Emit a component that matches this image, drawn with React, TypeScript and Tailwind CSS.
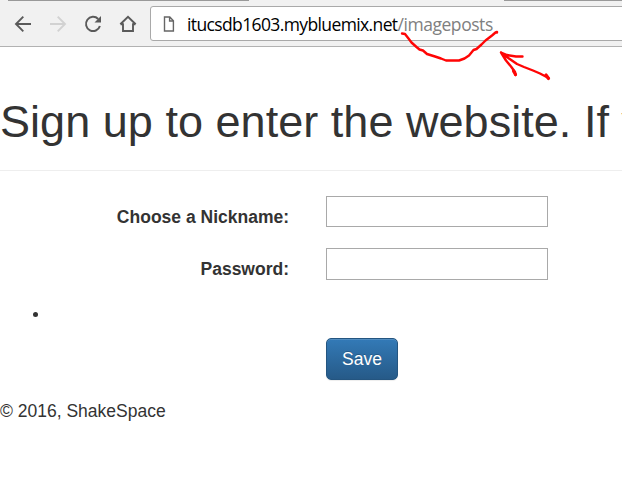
import React from "react";

function BackIcon() {
  return (
    <svg width="18" height="18" viewBox="0 0 18 18" fill="none" stroke="#5a5a5a" strokeWidth="1.9">
      <path d="M17 9H2M9.3 1.7L2 9l7.3 7.3" />
    </svg>
  );
}

function ForwardIcon() {
  return (
    <svg width="18" height="18" viewBox="0 0 18 18" fill="none" stroke="#d2d2d2" strokeWidth="1.9">
      <path d="M1 9h15M8.7 1.7L16 9l-7.3 7.3" />
    </svg>
  );
}

function ReloadIcon() {
  return (
    <svg width="18" height="18" viewBox="0 0 18 18" fill="none">
      <path d="M14.2 4A7.1 7.1 0 1 0 15.9 11" stroke="#5a5a5a" strokeWidth="2" />
      <path d="M17 1v6.5h-6.5z" fill="#5a5a5a" />
    </svg>
  );
}

function HomeIcon() {
  return (
    <svg width="18" height="18" viewBox="0 0 18 18" fill="none" stroke="#5a5a5a" strokeWidth="1.9">
      <path d="M4 8.3V16h10V8.3M1.6 9.4H4M14 9.4h2.4M1.3 9.3L9 1.8l7.7 7.5" />
    </svg>
  );
}

function PageIcon() {
  return (
    <svg width="12" height="16" viewBox="0 0 12 16" fill="none" stroke="#666" strokeWidth="1.4">
      <path d="M1.5 1h5.3L10.400 4.800V15H1.500zM6.600 1v4h3.800" />
    </svg>
  );
}

function Toolbar() {
  return (
    <header className="h-[47px] w-full border-b border-[#b2b2b2] bg-[#f1f1f1]">
      <div className="flex h-px justify-between">
        <div className="ml-2 w-[241px] bg-[#999]" />
        <div className="w-[118px] bg-[#999]" />
      </div>
      <div className="flex pt-[5px]">
        <div className="flex w-[150px] shrink-0 items-center gap-[17px] pl-3.5 pt-px">
          <BackIcon />
          <ForwardIcon />
          <ReloadIcon />
          <HomeIcon />
        </div>
        <div className="flex h-[35px] w-[480px] shrink-0 items-center rounded-[3px] border border-[#a9a9a9] bg-white pl-3">
          <PageIcon />
          <div className="ml-3 whitespace-nowrap font-['Open_Sans','Noto_Sans',sans-serif] text-[17.5px] leading-6 tracking-[-0.62px] text-black">
            itucsdb1603.mybluemix.net<span className="tracking-[-0.45px] text-[#808080]">/imageposts</span>
          </div>
        </div>
      </div>
    </header>
  );
}

function Annotation() {
  return (
    <svg
      className="pointer-events-none absolute left-0 top-0"
      width="622"
      height="90"
      viewBox="0 0 622 90"
      fill="none"
      stroke="#ff0505"
      strokeWidth="2.4"
      strokeLinecap="round"
      strokeLinejoin="round"
    >
      <path d="M402 33.500l3 .5 3.500 4.500 3 4 5 4.500 3 2.500 3.500 1 4 3.500 8 2.500 6 2 5 2h13l5.500-2 4.500-3 4.500-5.500 3-1 5-4.500 4-4 6.500-5 3.500-3 1.500-.5V32.500" />
      <path d="M501 52.500l8 6 8 5.500 7 3 9 3.500 7 3 8.500 4.500M501 52.500l6 2.500 9 1.500 6.500 0M501 52.500l5 8 5 6 4 5.500 .5 3" />
      <path d="M513.500 71l2 3.500M546 75l2.500 3.500" strokeWidth="3.200" />
    </svg>
  );
}

function Field({ label, type, className, inputClass }: { label: string; type: string; className: string; inputClass: string }) {
  return (
    <label className={`flex items-start ${className}`}>
      <span className="w-[289px] pt-[9px] text-right font-bold">{label}</span>
      <input type={type} className={`ml-[37px] w-[222px] border border-[#a9a9a9] bg-white outline-none ${inputClass}`} />
    </label>
  );
}

export default function App() {
  return (
    <div className="relative h-[495px] w-[622px] overflow-hidden bg-white font-['Liberation_Sans',Arial,sans-serif] text-[17.5px] leading-[25px] text-[#333]">
      <Toolbar />
      <h1 className="mt-[50px] whitespace-nowrap text-[45px] font-normal leading-[49.5px] tracking-[0.035px]">
        Sign up to enter the website. If y
      </h1>
      <hr className="mt-[23.5px] border-t border-[#eee]" />
      <form onSubmit={(e) => e.preventDefault()}>
        <Field label="Choose a Nickname:" type="text" className="mt-[25px] h-[52px]" inputClass="h-[31px]" />
        <Field label="Password:" type="password" className="h-[54px]" inputClass="h-8" />
        <ul className="h-9 list-none pl-[33px] pt-[10px]">
          <li className="h-[5px] w-[5px] rounded-full bg-[#333]" />
        </ul>
        <button
          type="submit"
          className="ml-[326px] block h-[42px] w-[72px] rounded-[5px] border border-[#245580] bg-linear-to-b from-[#337ab7] to-[#265a88] text-[17.5px] leading-[25px] text-white shadow-[inset_0_1px_0_rgba(255,255,255,0.15),0_1px_1px_rgba(0,0,0,0.075)] [text-shadow:0_-1px_0_rgba(0,0,0,0.2)]"
        >
          Save
        </button>
      </form>
      <footer className="mt-[19px]">© 2016, ShakeSpace</footer>
      <Annotation />
    </div>
  );
}
